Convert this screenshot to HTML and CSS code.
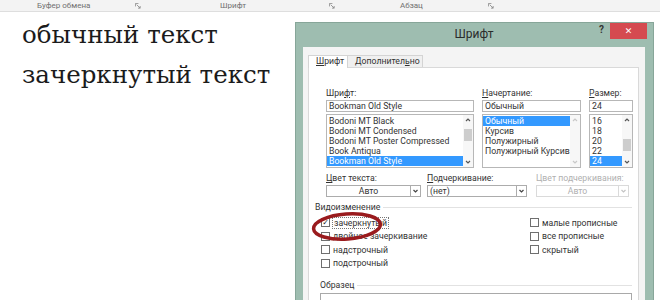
FILE: index.html
```html
<!DOCTYPE html>
<html lang="ru">
<head>
    <meta charset="UTF-8">
    <title>Шрифт</title>
    <link rel="stylesheet" href="styles.css">
</head>
<body>
    <div class="ribbon">
        <div class="rgroup clip">
            <span>Буфер обмена</span>
            <svg class="launch" viewBox="0 0 7 7"><path d="M0.5 4V0.5H4M2 2L6 6M6 3.5V6H3.5" fill="none" stroke="#8a8a8a" stroke-width="1"/></svg>
        </div>
        <div class="rgroup font">
            <span>Шрифт</span>
            <svg class="launch" viewBox="0 0 7 7"><path d="M0.5 4V0.5H4M2 2L6 6M6 3.5V6H3.5" fill="none" stroke="#8a8a8a" stroke-width="1"/></svg>
        </div>
        <div class="rgroup para">
            <span>Абзац</span>
            <svg class="launch" viewBox="0 0 7 7"><path d="M0.5 4V0.5H4M2 2L6 6M6 3.5V6H3.5" fill="none" stroke="#8a8a8a" stroke-width="1"/></svg>
        </div>
    </div>

    <div class="page">
        <div class="sample">
            <p>обычный текст</p>
            <p>зачеркнутый текст</p>
        </div>

        <div class="dialog">
            <div class="titlebar">
                <span></span>
                <span class="title">Шрифт</span>
                <div class="controls">
                    <span class="help">?</span>
                    <span class="close">✕</span>
                </div>
            </div>

            <div class="body">
                <div class="tabs">
                    <span class="tab active"><u>Ш</u>рифт</span>
                    <span class="tab">Дополнител<u>ь</u>но</span>
                </div>

                <div class="panel">
                    <div class="fontgrid">
                        <div class="field">
                            <div class="label">Шри<u>ф</u>т:</div>
                            <div class="input">Bookman Old Style</div>
                            <div class="list">
                                <div class="items">
                                    <div class="item">Bodoni MT Black</div>
                                    <div class="item">Bodoni MT Condensed</div>
                                    <div class="item">Bodoni MT Poster Compressed</div>
                                    <div class="item">Book Antiqua</div>
                                    <div class="item sel">Bookman Old Style</div>
                                </div>
                                <div class="scroll">
                                    <svg class="arrow" viewBox="0 0 10 10"><path d="M3 6L5 4L7 6" fill="none" stroke="#555" stroke-width="1.2"/></svg>
                                    <span class="thumb top"></span>
                                    <svg class="arrow down" viewBox="0 0 10 10"><path d="M3 4L5 6L7 4" fill="none" stroke="#555" stroke-width="1.2"/></svg>
                                </div>
                            </div>
                        </div>
                        <div class="field">
                            <div class="label"><u>Н</u>ачертание:</div>
                            <div class="input">Обычный</div>
                            <div class="list">
                                <div class="items">
                                    <div class="item sel">Обычный</div>
                                    <div class="item">Курсив</div>
                                    <div class="item">Полужирный</div>
                                    <div class="item">Полужирный Курсив</div>
                                </div>
                                <div class="scroll off">
                                    <svg class="arrow" viewBox="0 0 10 10"><path d="M3 6L5 4L7 6" fill="none" stroke="#c8c8c8" stroke-width="1.2"/></svg>
                                    <svg class="arrow down" viewBox="0 0 10 10"><path d="M3 4L5 6L7 4" fill="none" stroke="#c8c8c8" stroke-width="1.2"/></svg>
                                </div>
                            </div>
                        </div>
                        <div class="field">
                            <div class="label"><u>Р</u>азмер:</div>
                            <div class="input">24</div>
                            <div class="list">
                                <div class="items">
                                    <div class="item">16</div>
                                    <div class="item">18</div>
                                    <div class="item">20</div>
                                    <div class="item">22</div>
                                    <div class="item sel">24</div>
                                </div>
                                <div class="scroll">
                                    <svg class="arrow" viewBox="0 0 10 10"><path d="M3 6L5 4L7 6" fill="none" stroke="#555" stroke-width="1.2"/></svg>
                                    <span class="thumb low"></span>
                                    <svg class="arrow down" viewBox="0 0 10 10"><path d="M3 4L5 6L7 4" fill="none" stroke="#555" stroke-width="1.2"/></svg>
                                </div>
                            </div>
                        </div>
                    </div>

                    <div class="colorgrid">
                        <div class="field">
                            <div class="label"><u>Ц</u>вет текста:</div>
                            <div class="dd"><span class="val">Авто</span><span class="btn"><svg viewBox="0 0 9 10"><path d="M2.5 4L4.5 6L6.5 4" fill="none" stroke="#444" stroke-width="1.2"/></svg></span></div>
                        </div>
                        <div class="field">
                            <div class="label"><u>П</u>одчеркивание:</div>
                            <div class="dd"><span class="val left">(нет)</span><span class="btn"><svg viewBox="0 0 9 10"><path d="M2.5 4L4.5 6L6.5 4" fill="none" stroke="#444" stroke-width="1.2"/></svg></span></div>
                        </div>
                        <div class="field disabled">
                            <div class="label">Цвет подчеркивания:</div>
                            <div class="dd"><span class="val">Авто</span><span class="btn"><svg viewBox="0 0 9 10"><path d="M2.5 4L4.5 6L6.5 4" fill="none" stroke="#c4c4c4" stroke-width="1.2"/></svg></span></div>
                        </div>
                    </div>

                    <div class="group-label mods">Видоизменение</div>
                    <div class="effects">
                        <div class="col">
                            <div class="check on"><span class="box">✓</span><span class="focus">зачеркнутый</span></div>
                            <div class="check"><span class="box"></span><span>двойное зачеркивание</span></div>
                            <div class="check"><span class="box"></span><span>надстрочный</span></div>
                            <div class="check"><span class="box"></span><span>подстрочный</span></div>
                        </div>
                        <div class="col">
                            <div class="check"><span class="box"></span><span>малые прописные</span></div>
                            <div class="check"><span class="box"></span><span>все прописные</span></div>
                            <div class="check"><span class="box"></span><span>скрытый</span></div>
                        </div>
                    </div>

                    <div class="group-label preview-label">Образец</div>
                    <div class="preview"><span>M</span></div>
                </div>
            </div>

            <svg class="mark" viewBox="0 0 80 36">
                <ellipse cx="38" cy="17.5" rx="33.5" ry="12.5" fill="none" stroke="#9a1b1e" stroke-width="3.5" transform="rotate(-4 38 17.5)"/>
            </svg>
        </div>
    </div>
</body>
</html>
```

FILE: styles.css
```css
body {
    margin: 0;
    width: 660px;
    height: 300px;
    overflow: hidden;
    background: #fff;
    font-family: Roboto, "Noto Sans", "DejaVu Sans", sans-serif;
    color: #333;
}

/* ribbon strip */
.ribbon {
    display: flex;
    height: 11px;
    background: #f3f3f3;
    border-bottom: 1px solid #dedede;
    font-size: 8px;
    line-height: 11px;
    color: #707070;
}
.rgroup {
    display: flex;
    align-items: center;
    box-sizing: border-box;
}
.rgroup.clip { width: 145px; padding: 0 4px 0 37px; }
.rgroup.font { width: 195px; padding: 0 5px 0 75px; }
.rgroup.para { width: 158px; padding: 0 4px 0 60px; }
.launch {
    margin-left: auto;
    width: 6px;
    height: 6px;
}

.page {
    display: flex;
}

.sample {
    width: 295px;
    flex-shrink: 0;
    box-sizing: border-box;
    padding: 3px 0 0 22px;
    font-family: "DejaVu Serif", "Liberation Serif", serif;
    font-size: 24.5px;
    line-height: 40px;
    color: #1b1b1b;
}
.sample p {
    margin: 0;
    white-space: nowrap;
}

/* dialog window */
.dialog {
    position: relative;
    width: 359px;
    height: 300px;
    flex-shrink: 0;
    margin-top: 10px;
    box-sizing: border-box;
    background: #9ebdb0;
    border: 1px solid #87a699;
    padding: 0 8px 0 7px;
}
.titlebar {
    display: grid;
    grid-template-columns: 1fr auto 1fr;
    height: 23px;
}
.title {
    font-size: 12px;
    line-height: 23px;
    color: #2b2b2b;
}
.controls {
    justify-self: end;
    display: flex;
    align-items: flex-start;
    margin-right: -2px;
}
.help {
    font-size: 10px;
    font-weight: bold;
    line-height: 14px;
    color: #333;
    margin-right: 6px;
}
.close {
    width: 37px;
    height: 16px;
    background: #d54a50;
    color: #fff;
    font-size: 9px;
    line-height: 16px;
    text-align: center;
}

.body {
    margin-top: 1px;
    height: 260px;
    overflow: hidden;
    background: #f4f4f4;
    padding: 8px 6px 0 5px;
    font-size: 8.7px;
}
.tabs {
    display: flex;
    height: 12px;
}
.tab {
    box-sizing: border-box;
    height: 12px;
    line-height: 11px;
    padding: 0 7px;
    border: 1px solid #d4d4d4;
    border-bottom: none;
    background: #f0f0f0;
    color: #333;
}
.tab.active {
    width: 40px;
    height: 13px;
    background: #fff;
    position: relative;
    z-index: 1;
}
.tab + .tab {
    border-left: none;
    width: 75px;
}

.panel {
    height: 240px;
    background: #fff;
    border: 1px solid #d9d9d9;
    padding: 19px 6px 0 17px;
}

.label {
    height: 13px;
    line-height: 12px;
    white-space: nowrap;
    color: #333;
}

.fontgrid {
    display: grid;
    grid-template-columns: 148px 99px 44px;
    column-gap: 8px;
}
.input {
    box-sizing: border-box;
    height: 12px;
    border: 1px solid #b7b7b7;
    line-height: 10px;
    padding-left: 2px;
    margin-bottom: 2px;
}
.list {
    box-sizing: border-box;
    height: 54px;
    border: 1px solid #b7b7b7;
    display: flex;
}
.items {
    flex: 1;
    min-width: 0;
    padding-top: 1px;
}
.item {
    height: 10px;
    line-height: 10px;
    padding-left: 2px;
    white-space: nowrap;
    overflow: hidden;
}
.item.sel {
    background: #3399ff;
    color: #fff;
}
.scroll {
    width: 10px;
    display: flex;
    flex-direction: column;
    background: #f7f7f7;
}
.arrow {
    width: 10px;
    height: 10px;
    flex-shrink: 0;
}
.arrow.down {
    margin-top: auto;
}
.thumb {
    height: 12px;
    margin: 4px 1px 0;
    background: #cdcdcd;
}
.thumb.low { margin-top: 14px; }

.colorgrid {
    display: grid;
    grid-template-columns: 95px 100px 96px;
    column-gap: 6px;
    margin-top: 4px;
}
.colorgrid .field:last-child { margin-left: 3px; }
.dd {
    box-sizing: border-box;
    height: 12px;
    border: 1px solid #acacac;
    display: flex;
    line-height: 10px;
}
.dd .val {
    flex: 1;
    text-align: center;
}
.dd .val.left {
    text-align: left;
    padding-left: 2px;
}
.dd .btn {
    width: 9px;
    border-left: 1px solid #acacac;
    display: flex;
}
.dd .btn svg {
    width: 9px;
    height: 10px;
}
.disabled .label,
.disabled .dd .val { color: #b0b0b0; }
.disabled .dd,
.disabled .dd .btn { border-color: #dadada; }

.group-label {
    display: flex;
    align-items: center;
    height: 10px;
    line-height: 10px;
    white-space: nowrap;
    color: #333;
}
.group-label::after {
    content: "";
    flex: 1;
    height: 1px;
    margin-left: 3px;
    background: #e2e2e2;
}
.mods {
    margin: 5px 0 0 -11px;
}

.effects {
    display: grid;
    grid-template-columns: 209px 1fr;
    margin: 4px 0 0 -5px;
}
.check {
    display: flex;
    align-items: center;
    height: 13.5px;
    white-space: nowrap;
}
.box {
    box-sizing: border-box;
    width: 9px;
    height: 9px;
    border: 1px solid #6f6f6f;
    margin-right: 3px;
    font-size: 8px;
    line-height: 7px;
    text-align: center;
    color: #222;
}
.focus {
    outline: 1px dotted #777;
    padding: 0 1px;
}

.preview-label {
    margin: 10px 0 0 -6px;
}
.preview {
    height: 30px;
    margin: 3px 0 0 -6px;
    border: 1px solid #a9a9a9;
    text-align: center;
    font-size: 16px;
    line-height: 24px;
    color: #111;
}
.preview span {
    position: relative;
    top: 3px;
}

/* red hand-drawn mark over the checkbox */
.mark {
    position: absolute;
    left: 13px;
    top: 186px;
    width: 80px;
    height: 36px;
}
```
